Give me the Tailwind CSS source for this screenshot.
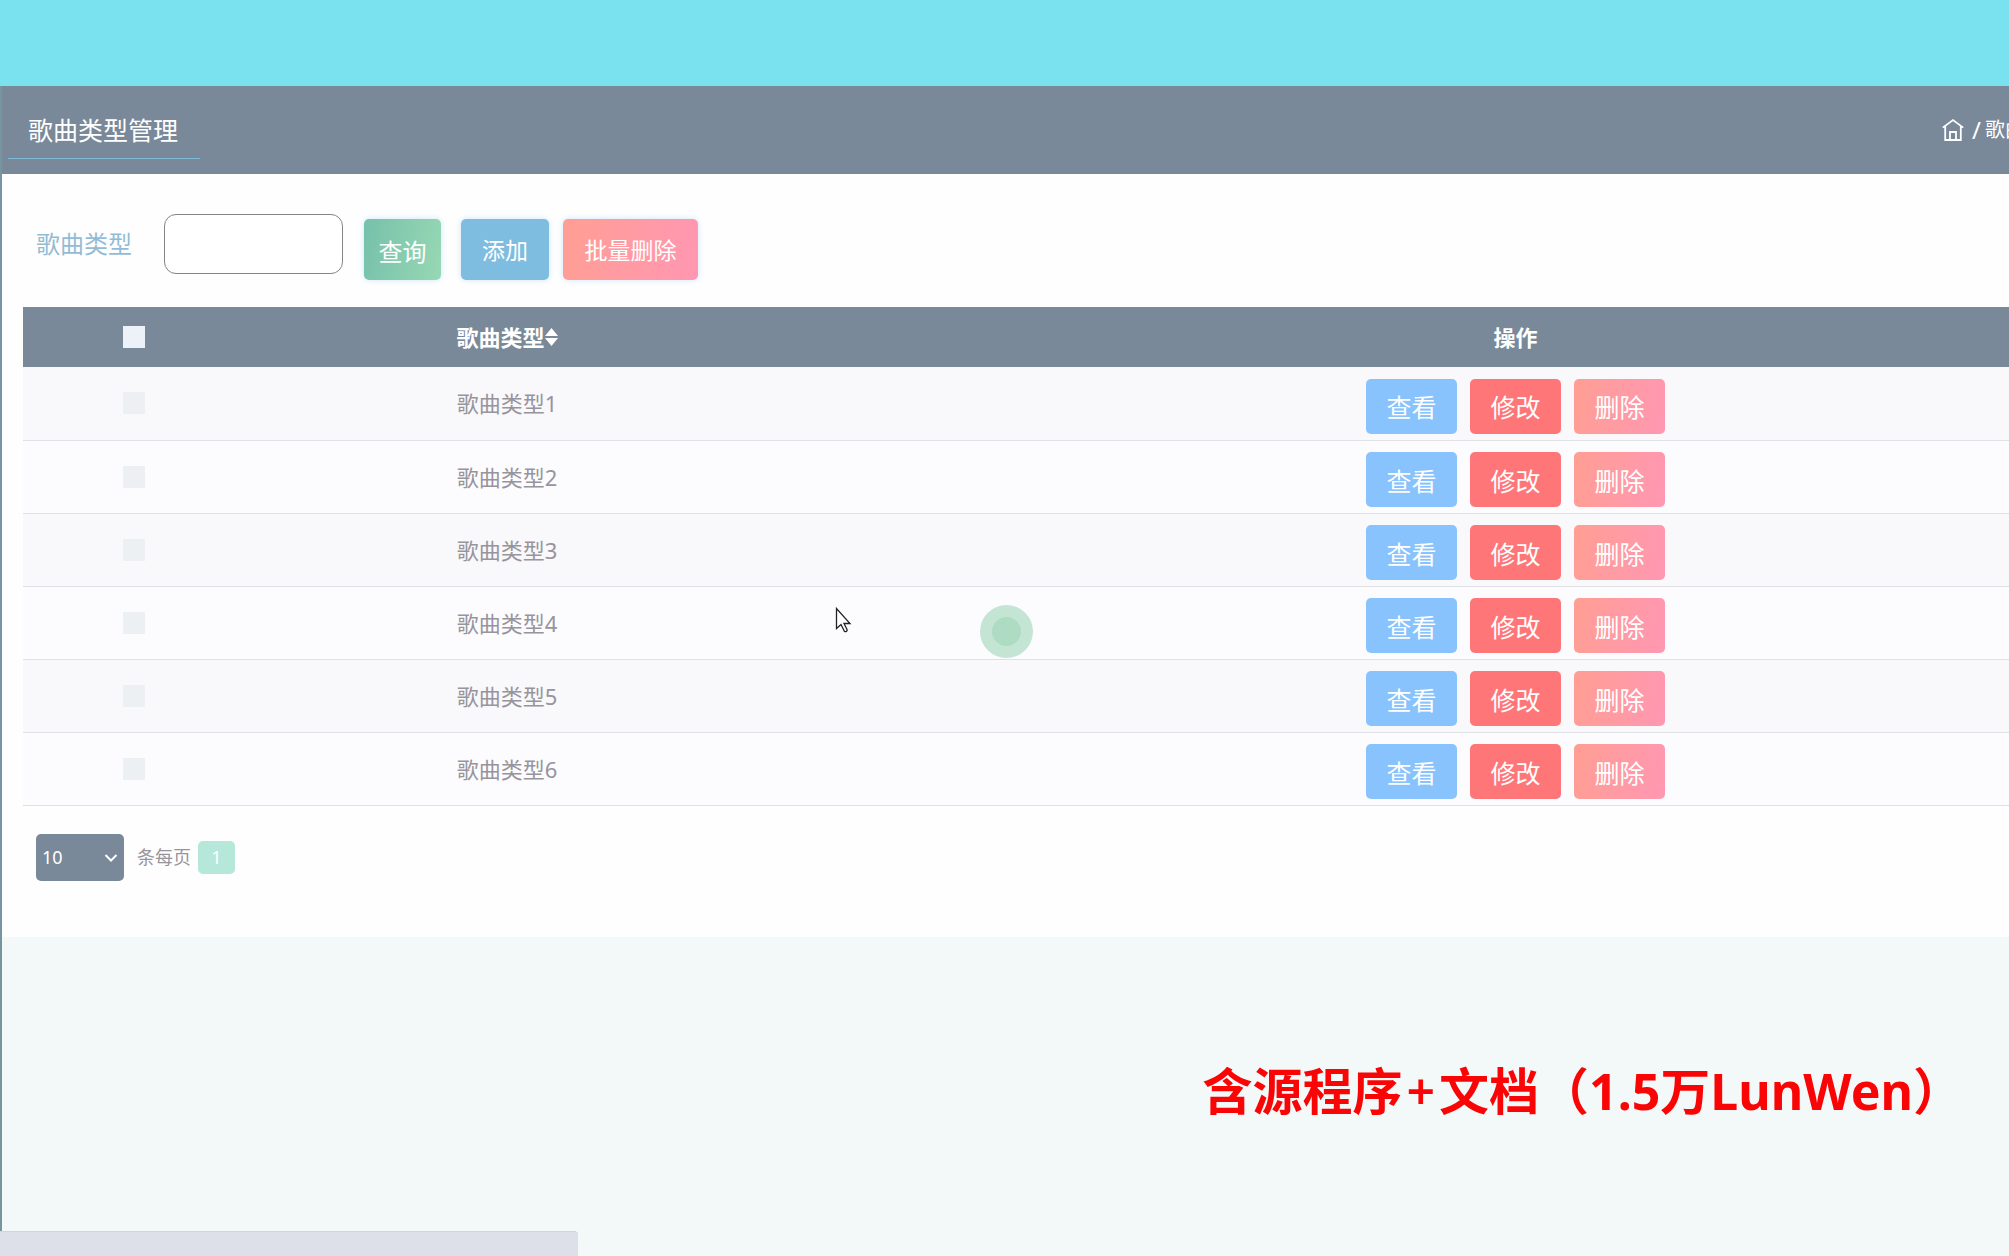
<!DOCTYPE html>
<html lang="zh-CN">
<head>
<meta charset="utf-8">
<title>歌曲类型管理</title>
<script src="https://cdn.jsdelivr.net/npm/@tailwindcss/browser@4"></script>
</head>
<body class="relative flex min-h-screen flex-col overflow-x-hidden bg-[#f3f9f8] font-['Noto_Sans','Noto_Sans_CJK_SC',sans-serif] text-[22px] leading-8 text-[#98949c]">
  <div class="h-[86px] bg-[#7ae1ef]"></div>
  <div class="flex flex-1 flex-col border-l-2 border-[#7596a0]">
    <header class="flex h-[88px] items-center justify-between bg-[#798999] pl-[6px] text-white">
      <h1 class="flex h-[58px] w-48 items-center border-b border-[#7fb8d4] pl-5 text-[25px]">歌曲类型管理</h1>
      <nav class="flex w-[67px] items-center gap-2 whitespace-nowrap text-xl" aria-label="位置">
        <a href="#" aria-label="首页" class="shrink-0">
          <svg class="h-6 w-[22px]" viewBox="0 0 22 24" fill="none" stroke="currentColor" stroke-width="1.8"><path d="M.8 9.6 11 2l10.200 7.600M3.200 8.500V22h15.600V8.500M8 22v-8h6v8"/></svg>
        </a>
        <span class="text-2xl leading-8">/</span><span class="-ml-1">歌曲类型管理</span>
      </nav>
    </header>

    <main class="h-[763px] overflow-hidden bg-[#fefefe] pl-[21px]">
      <form class="flex h-[133px] items-start pt-10 pl-[13px] text-[23px]">
        <label for="type" class="mt-[14px] w-32 text-2xl leading-8 text-[#92bcd6]">歌曲类型</label>
        <input id="type" type="text" class="h-[60px] w-[179px] rounded-xl border border-[#858585] bg-white px-3">
        <button type="button" class="mt-[5px] ml-[21px] h-[61px] w-[77px] rounded-[5px] bg-linear-100 from-[#76c0aa] to-[#97d8b4] pt-1 text-2xl text-white shadow-[0_0_6px_#cfe6fa]">查询</button>
        <button type="button" class="mt-[5px] ml-5 h-[61px] w-[88px] rounded-[5px] bg-[#7ebde0] text-white shadow-[0_0_6px_#cfe6fa]">添加</button>
        <button type="button" class="mt-[5px] ml-[14px] h-[61px] w-[135px] rounded-[5px] bg-linear-100 from-[#ff9e93] to-[#ff97b2] text-white shadow-[0_0_6px_#cfe6fa]">批量删除</button>
      </form>

      <table class="w-[calc(100%+252px)] table-fixed border-collapse text-center">
        <colgroup><col class="w-[221px]"><col class="w-[526px]"><col></colgroup>
        <thead class="bg-[#798999] text-white">
          <tr class="h-[60px]">
            <th><input type="checkbox" aria-label="全选" class="block mx-auto h-[22px] w-[22px] appearance-none bg-[#edf2f8]"></th>
            <th><span class="inline-flex items-center">歌曲类型<svg class="h-5 w-[13px]" viewBox="0 0 13 20" fill="currentColor"><path d="M6.500 1 13 9H0zM6.500 19 0 11h13z"/></svg></span></th>
            <th>操作</th>
          </tr>
        </thead>
        <tbody id="rows"></tbody>
      </table>

      <div class="mt-7 flex items-center pl-[13px] text-lg">
        <div class="relative">
          <select aria-label="每页条数" class="block h-[47px] w-[88px] appearance-none rounded-[5px] bg-[#798999] pl-1.5 text-white"><option>10</option><option>20</option></select>
          <svg class="pointer-events-none absolute top-[19px] right-1.5 h-2.5 w-[14px]" viewBox="0 0 14 10" fill="none" stroke="#fff" stroke-width="2"><path d="m1.500 2 5.500 5.500L12.500 2"/></svg>
        </div>
        <span class="ml-[13px]">条每页</span>
        <button type="button" class="ml-[7px] h-[33px] w-[37px] rounded-[5px] bg-[#b5e8d8] text-white">1</button>
      </div>
    </main>

    <p class="mt-[122px] mr-[46px] text-right text-[50px] leading-[64px] font-bold text-[#fa0505]">含源程序<span class="mx-1 font-semibold">+</span>文档（1.5万LunWen）</p>
  </div>

  <div class="absolute bottom-0 left-0 h-[25px] w-[578px] rounded-tr border-t border-[#cdd6da] bg-[#dde0e8]"></div>
  <div class="absolute top-[605px] left-[980px] flex size-[53px] items-center justify-center rounded-full bg-[#c5e5d4]"><div class="size-[29px] rounded-full bg-[#addcc2]"></div></div>
  <svg class="absolute top-[607px] left-[835px] h-[27px] w-[18px]" viewBox="0 0 18 27" fill="#fff" stroke="#222" stroke-width="1.300"><path d="M1.500 1.500v20l4.500-4 3.500 7c1.500.500 3-.500 2.500-2l-3-6h6z"/></svg>

  <template id="row">
    <tr class="h-[73px] border-b border-[#dfe1e5] odd:bg-[#f9f8fa] even:bg-[#fcfcfe]">
      <td><input type="checkbox" class="block mx-auto h-[22px] w-[22px] appearance-none bg-[#edf0f2]"></td>
      <td></td>
      <td>
        <div class="flex justify-center gap-[13px] pt-1.5 text-[25px] text-white">
          <button type="button" class="h-[55px] w-[91px] rounded-[5px] bg-[#88c3fd] pt-0.5">查看</button>
          <button type="button" class="h-[55px] w-[91px] rounded-[5px] bg-[#ff7679] pt-0.5">修改</button>
          <button type="button" class="h-[55px] w-[91px] rounded-[5px] bg-linear-100 from-[#ff9e93] to-[#ff97b2] pt-0.5">删除</button>
        </div>
      </td>
    </tr>
  </template>
  <script>
    const tpl = document.getElementById('row');
    for (let i = 1; i <= 6; i++) {
      const row = tpl.content.cloneNode(true);
      row.querySelectorAll('td')[1].textContent = '歌曲类型' + i;
      row.querySelector('input').setAttribute('aria-label', '选择歌曲类型' + i);
      document.getElementById('rows').append(row);
    }
  </script>
</body>
</html>
